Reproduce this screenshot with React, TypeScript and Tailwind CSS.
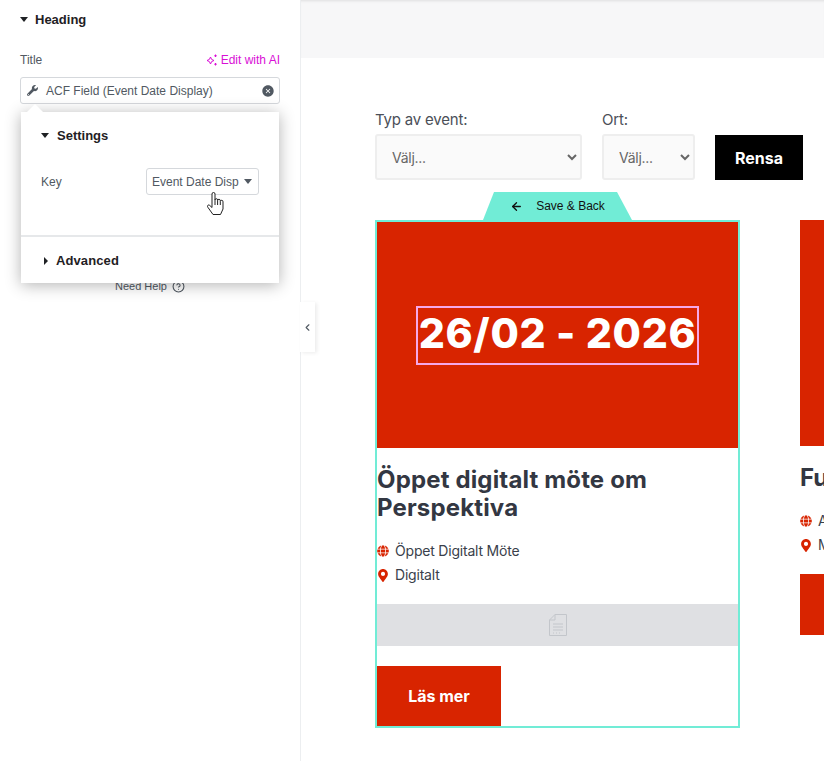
import { ArrowLeft, ChevronLeft, CircleHelp } from "lucide-react";
import { FaGlobe, FaMapMarkerAlt, FaWrench } from "react-icons/fa";
import { IoCloseCircle } from "react-icons/io5";

const Caret = ({ className }: Readonly<{ className: string }>) => (
  <svg className={className} viewBox="0 0 8 5" fill="currentColor">
    <path d="M0 0h8L4 5z" />
  </svg>
);

const Sparkle = () => (
  <svg className="h-[12px] w-[12px] text-[#d90fd6]" viewBox="0 0 12 12" fill="none" stroke="currentColor">
    <path d="M4.5 3 5.6 5.4 8 6.5 5.6 7.6 4.5 10 3.4 7.6 1 6.5 3.4 5.4z" strokeWidth="1" />
    <path d="M9.5 0.5v2.5M8.2 1.8h2.6M9.5 9v2.5M8.2 10.2h2.6" strokeWidth="1" />
  </svg>
);

const HandCursor = () => (
  <svg
    className="absolute top-[23px] left-[60px] h-[23px] w-[17px] text-[#222]"
    viewBox="0 0 17 23"
    fill="#fff"
    stroke="currentColor"
    strokeLinejoin="round"
  >
    <path d="M5 2a1.5 1.5 0 0 1 3 0v6a1.3 1.3 0 0 1 2.6 0v.5a1.3 1.3 0 0 1 2.7.3v.7a1.3 1.3 0 0 1 2.7.3V17l-2.5 5.5H6L.8 15.2a1.3 1.3 0 0 1 1.9-1.8L5 15.5z" />
    <path d="M8 8v5M10.6 8.5v4.5M13.3 9.8V13" />
  </svg>
);

const PopoverPanel = () => (
  <div className="absolute top-[112px] left-[21px] w-[258px] bg-white shadow-[0_2px_15px_rgba(0,0,0,0.3)]">
    <div className="absolute -top-[8px] left-[6px] h-0 w-0 border-x-[8px] border-b-[8px] border-x-transparent border-b-white" />
    <div className="h-[125px] border-b-2 border-[#e6e8ea] px-5 pt-[15px]">
      <div className="flex items-center gap-[8px] text-[13px] leading-[17px] font-bold text-[#1f2124]">
        <Caret className="h-[5px] w-[8px]" />
        Settings
      </div>
      <div className="mt-[24px] flex items-center justify-between">
        <span className="text-xs text-[#515962]">Key</span>
        <div className="relative flex h-[27px] w-[113px] items-center justify-between rounded-[3px] border border-[#d5d8dc] pr-[6px] pl-[5px] text-xs text-[#515962]">
          <span>Event Date Disp</span>
          <Caret className="h-[5px] w-[8px]" />
          <HandCursor />
        </div>
      </div>
    </div>
    <div className="flex h-[46px] items-center gap-[8px] pt-[1px] pl-[23px] text-[13px] font-bold tracking-[0.1px] text-[#1f2124]">
      <svg className="h-[8px] w-[4px]" viewBox="0 0 4 8" fill="currentColor">
        <path d="M0 0l4 4-4 4z" />
      </svg>
      Advanced
    </div>
  </div>
);

const Sidebar = () => (
  <aside className="relative flex h-full w-[301px] shrink-0 flex-col border-r border-[#eceef0] bg-white px-5 font-['Liberation_Sans',sans-serif]">
    <div className="flex items-center gap-[7px] pt-[11px] text-[13px] leading-[17px] font-bold text-[#1f2124]">
      <Caret className="h-[5px] w-[8px]" />
      Heading
    </div>
    <div className="mt-[24px] flex items-center justify-between text-xs leading-[16px]">
      <span className="text-[#515962]">Title</span>
      <span className="flex items-center gap-[3px] text-[#d90fd6]">
        <Sparkle />
        Edit with AI
      </span>
    </div>
    <div className="mt-[9px] flex h-[27px] items-center rounded-[3px] border border-[#d5d8dc] pr-[4px] pl-[6px] text-xs text-[#515962]">
      <FaWrench className="h-[11px] w-[11px] text-[#515962]" />
      <span className="ml-[8px] flex-1">ACF Field (Event Date Display)</span>
      <IoCloseCircle className="h-[14px] w-[14px] text-[#515962]" />
    </div>
    <div className="mt-[174px] flex items-center justify-center gap-[5px] text-[11px] leading-[16px] text-[#515962]">
      Need Help
      <CircleHelp className="h-[13px] w-[13px]" />
    </div>
    <PopoverPanel />
    <div className="absolute top-[302px] left-full z-10 flex h-[50px] w-[15px] items-center justify-center bg-white shadow-[2px_1px_4px_rgba(0,0,0,0.08)]">
      <ChevronLeft className="h-[11px] w-[11px] text-[#515962]" strokeWidth={2.5} />
    </div>
  </aside>
);

const FilterSelect = ({ label, width }: Readonly<{ label: string; width: string }>) => (
  <label className={`flex flex-col gap-[4px] ${width}`}>
    <span className="text-[15px] leading-[20px] tracking-[-0.2px] text-[#4b4f58]">{label}</span>
    <select className="h-[46px] w-full rounded-[3px] border-2 border-[#eeeeee] bg-[#fafafa] pr-[2px] pl-[11px] text-sm tracking-[-0.3px] text-[#666]">
      <option>Välj...</option>
    </select>
  </label>
);

const TagRows = ({ type, place }: Readonly<{ type: string; place: string }>) => (
  <div className="flex flex-col gap-[6px] text-sm leading-[18px] tracking-[-0.2px] text-[#3a3f4b]">
    <div className="flex items-center gap-[6px]">
      <FaGlobe className="h-[12px] w-[12px] text-[#d82400]" />
      <span className="whitespace-nowrap">{type}</span>
    </div>
    <div className="flex items-center gap-[6px]">
      <FaMapMarkerAlt className="h-[13px] w-[12px] text-[#d82400]" />
      <span className="whitespace-nowrap">{place}</span>
    </div>
  </div>
);

const FirstCard = () => (
  <article className="relative h-[508px] w-[365px] shrink-0 border-2 border-[#71ecd6] bg-white">
    <div className="absolute -top-[30px] left-[106px] flex h-[28px] w-[149px] items-center justify-center gap-[13px] bg-[#71ecd6] font-['Liberation_Sans',sans-serif] text-xs text-[#111] [clip-path:polygon(11px_0,134px_0,149px_100%,0_100%)]">
      <ArrowLeft className="h-[13px] w-[13px]" strokeWidth={2.5} />
      Save &amp; Back
    </div>
    <div className="flex h-[226px] items-center justify-center bg-[#d82400]">
      <div className="border-2 border-[#f5a8e8] px-[1px] pb-[4px] text-[41px] leading-[51px] font-extrabold tracking-[0.7px] whitespace-nowrap text-white">
        26/02 - 2026
      </div>
    </div>
    <h2 className="mt-[18px] text-2xl leading-[28px] font-bold tracking-[0.15px] text-[#333742]">
      Öppet digitalt möte om Perspektiva
    </h2>
    <div className="mt-[20px]">
      <TagRows type="Öppet Digitalt Möte" place="Digitalt" />
    </div>
    <div className="mt-[20px] flex h-[42px] items-center justify-center bg-[#dfe0e3]">
      <svg className="h-[22px] w-[18px] text-[#c3c6cb]" viewBox="0 0 18 22" fill="none" stroke="currentColor">
        <path d="M6 .5h11.5v21H.5V6zM6 .5V6H.5M4 10h10M4 13h10M4 16h10M4 19h1M7 19h1M10 19h1" />
      </svg>
    </div>
    <div className="mt-[20px] flex h-[60px] w-[124px] items-center justify-center bg-[#d82400] pb-[1px] text-base font-bold text-white">
      Läs mer
    </div>
  </article>
);

const SecondCard = () => (
  <article className="w-[365px] shrink-0">
    <div className="h-[226px] bg-[#d82400]" />
    <h2 className="mt-[18px] text-2xl leading-[28px] font-bold text-[#333742]">Fu</h2>
    <div className="mt-[20px]">
      <TagRows type="A" place="M" />
    </div>
    <div className="mt-[20px] h-[61px] bg-[#d82400]" />
  </article>
);

export default function App() {
  return (
    <div className="flex h-[761px] w-[824px] overflow-hidden bg-white font-['Inter',sans-serif]">
      <Sidebar />
      <main className="flex min-w-0 flex-1 flex-col">
        <div className="h-[58px] shrink-0 bg-[#f7f7f8] shadow-[inset_0_3px_3px_-2px_rgba(0,0,0,0.1)]" />
        <div className="flex items-end gap-5 pt-[52px] pl-[74px]">
          <FilterSelect label="Typ av event:" width="w-[207px]" />
          <FilterSelect label="Ort:" width="w-[93px]" />
          <button className="h-[45px] w-[88px] bg-black text-base font-bold text-white" type="button">
            Rensa
          </button>
        </div>
        <div className="flex gap-[60px] pt-[40px] pl-[74px]">
          <FirstCard />
          <SecondCard />
        </div>
      </main>
    </div>
  );
}
